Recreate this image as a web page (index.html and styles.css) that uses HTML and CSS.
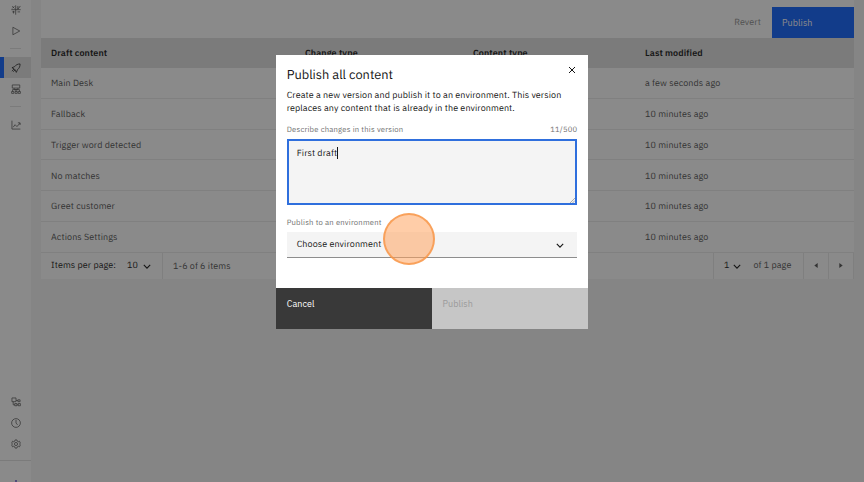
FILE: index.html
```
<!DOCTYPE html>
<html lang="en">
<head>
<meta charset="utf-8">
<title>Publish all content</title>
<link rel="stylesheet" href="styles.css">
</head>
<body>
<div class="app">
  <nav class="rail">
    <div class="rail-top">
      <a class="rail-item"><svg viewBox="0 0 32 32"><path d="M15 1v30M1 15h30M22 3v12M4 4l7 7M11 4l-7 7M20 9l3 3 7-9M4 22h8M8 19v8M21 22h8"/></svg></a>
      <a class="rail-item"><svg viewBox="0 0 32 32"><path d="M6 4v24l22-12z"/></svg></a>
      <i class="rule"></i>
      <a class="rail-item active"><svg viewBox="0 0 32 32"><path d="M29 3c-8 0-13 3-18 9l-8 3 7 4 3 3 4 8 4-9c6-5 8-10 8-18zM10 19l-7 7M13 22l-6 6"/></svg></a>
      <a class="rail-item"><svg viewBox="0 0 32 32"><path d="M4 3h24v10H4zM10 13v5h12v-5M16 18v6M5 24v-6h22v6M2 24h7v6H2zM13 24h7v6h-7zM23 24h7v6h-7z"/></svg></a>
      <i class="rule second"></i>
      <a class="rail-item"><svg viewBox="0 0 32 32"><path d="M3 2v27h27M7 23l6-8 6 6 10-11M22 9h7v7"/></svg></a>
    </div>
    <div class="rail-bottom">
      <a class="rail-item"><svg viewBox="0 0 32 32"><path d="M3 3h13v12H3zM7 15v10h5M16 11h6M22 9h7v6h-7zM12 21h7v7h-7zM23 21h7v7h-7zM19 25h4"/></svg></a>
      <a class="rail-item"><svg viewBox="0 0 32 32"><circle cx="16" cy="16" r="14"/><path d="M16 6v10l5 6"/></svg></a>
      <a class="rail-item"><svg viewBox="0 0 32 32"><circle cx="16" cy="16" r="5"/><path d="M13 3h6l1 4 3 2 4-2 3 6-3 3 3 3-3 6-4-2-3 2-1 4h-6l-1-4-3-2-4 2-3-6 3-3-3-3 3-6 4 2 3-2z"/></svg></a>
      <div class="rail-foot"><i></i></div>
    </div>
  </nav>
  <main class="content">
    <div class="toolbar"><span class="revert">Revert</span><button class="primary">Publish</button></div>
    <div class="row head"><span>Draft content</span><span>Change type</span><span>Content type</span><span>Last modified</span></div>
    <div class="row"><span>Main Desk</span><span></span><span></span><span>a few seconds ago</span></div>
    <div class="row"><span>Fallback</span><span></span><span></span><span>10 minutes ago</span></div>
    <div class="row"><span>Trigger word detected</span><span></span><span></span><span>10 minutes ago</span></div>
    <div class="row"><span>No matches</span><span></span><span></span><span>10 minutes ago</span></div>
    <div class="row"><span>Greet customer</span><span></span><span></span><span>10 minutes ago</span></div>
    <div class="row"><span>Actions Settings</span><span></span><span></span><span>10 minutes ago</span></div>
    <div class="pager">
      <div class="per-page"><span>Items per page:</span><b>10</b><svg class="chev" viewBox="0 0 10 6"><path d="M1 1l4 4 4-4"/></svg></div>
      <div class="range">1-6 of 6 items</div>
      <div class="page-no"><b>1</b><svg class="chev" viewBox="0 0 10 6"><path d="M1 1l4 4 4-4"/></svg><span>of 1 page</span></div>
      <div class="step"><svg viewBox="0 0 4 6"><path d="M4 0v6L0 3z"/></svg></div>
      <div class="step"><svg viewBox="0 0 4 6"><path d="M0 0v6l4-3z"/></svg></div>
    </div>
  </main>
</div>
<div class="overlay">
  <section class="modal">
    <div class="body">
      <header><h2>Publish all content</h2><svg class="close" viewBox="0 0 8 8"><path d="M1 1l6 6M7 1L1 7"/></svg></header>
      <p>Create a new version and publish it to an environment. This version<br>replaces any content that is already in the environment.</p>
      <div class="labels"><span class="label">Describe changes in this version</span><span class="label">11/500</span></div>
      <div class="textarea"><span>First draft</span><i class="caret"></i><svg class="grip" viewBox="0 0 6 6"><path d="M0 6l6-6M3 6l3-3"/></svg></div>
      <div class="label env">Publish to an environment</div>
      <div class="select"><span>Choose environment</span><svg class="chev" viewBox="0 0 10 6"><path d="M1 1l4 4 4-4"/></svg></div>
    </div>
    <footer><button class="cancel">Cancel</button><button class="disabled">Publish</button></footer>
  </section>
</div>
<div class="pointer"></div>
</body>
</html>
```
FILE: styles.css
```
* { box-sizing: border-box; }
body { margin: 0; width: 864px; height: 482px; overflow: hidden; background: #f4f4f4; color: #161616; font: 8.96px/12px "IBM Plex Sans", Roboto, "Liberation Sans", sans-serif; letter-spacing: .1px; text-rendering: geometricPrecision; }
button { border: 0; font: inherit; letter-spacing: inherit; text-align: left; }
svg { display: block; fill: none; stroke: currentColor; }
.app { display: flex; height: 482px; }
.rail { display: flex; flex-direction: column; justify-content: space-between; width: 31px; background: #fff; color: #525252; }
.rail-top { margin-top: -1px; }
.rail-item { display: flex; align-items: center; justify-content: center; height: 21px; }
.rail-item svg { width: 10px; height: 10px; stroke-width: 2.4; }
.rail .active { background: #e0e0e0; border-left: 4px solid #0f62fe; padding-right: 4px; color: #161616; }
.rule { display: block; width: 11px; height: 1px; margin: 7px auto 8px; background: #e0e0e0; }
.rule.second { margin: 7px auto; }
.rail-foot { height: 22px; margin-top: 6px; border-top: 1px solid #e0e0e0; display: flex; align-items: flex-end; justify-content: center; }
.rail-foot i { width: 2px; height: 2px; background: #8a80dd; }
.content { width: 813px; margin-left: 10px; }
.toolbar { display: flex; justify-content: flex-end; height: 38px; padding-top: 7px; background: #fff; }
.revert { padding: 10px 11px; color: #8d8d8d; }
.primary { width: 82px; padding: 0 10px; background: #0f62fe; color: #fff; }
.row { display: grid; grid-template-columns: 254px 168px 172px 1fr; align-items: center; height: 30.75px; padding: 3px 10px 0; background: #fff; border-bottom: 1px solid #ebebeb; color: #525252; }
.head { height: 30px; padding-top: 2px; background: #e0e0e0; border-color: #e0e0e0; color: #161616; font-weight: 600; }
.pager { display: flex; height: 26.5px; background: #fff; color: #525252; line-height: 28px; }
.pager b { color: #161616; font-weight: 400; }
.pager div { border-right: 1px solid #e8e8e8; }
.chev { width: 8px; height: 5px; color: #161616; stroke-width: 1.4; }
.per-page, .page-no { display: flex; align-items: center; }
.per-page, .page-no { padding-top: 1px; }
.per-page { width: 122px; padding-left: 10px; color: #161616; }
.per-page b { margin: 0 5px 0 11px; }
.range { flex: 1; padding-left: 10px; }
.page-no { width: 90px; padding-left: 10px; }
.page-no b { margin-right: 4px; }
.page-no span { margin-left: 12px; }
.step { display: flex; align-items: center; justify-content: center; width: 25px; }
.step svg { width: 4px; height: 5px; fill: currentColor; stroke: none; }
.overlay { position: fixed; inset: 0; background: rgba(22,22,22,.5); }
.modal { width: 311.3px; height: 274px; margin: 55px 0 0 276.4px; background: #fff; display: flex; flex-direction: column; }
.body { flex: 1; padding: 12px 10.3px 0; }
header { display: flex; justify-content: space-between; height: 22px; }
h2 { margin: 0; font-size: 12.8px; line-height: 16px; font-weight: 400; letter-spacing: 0; }
.close { width: 8px; height: 8px; margin: -1px 1px 0 0; }
p { margin: 0; line-height: 13px; white-space: nowrap; }
.labels { display: flex; justify-content: space-between; margin-top: 9px; }
.label { font-size: 7.68px; line-height: 12px; letter-spacing: .2px; color: #6f6f6f; }
.textarea { position: relative; display: flex; height: 66px; margin-top: 3px; padding: 6px 8px; border: 2px solid #2f6fdd; background: #f4f4f4; line-height: 13px; }
.caret { width: 1px; height: 12px; background: #161616; }
.grip { position: absolute; right: 0; bottom: 0; width: 5px; height: 5px; stroke: #777; stroke-width: .7; }
.env { margin-top: 12px; }
.select { display: flex; align-items: center; justify-content: space-between; height: 26px; margin-top: 3px; padding: 1px 13px 0 10px; background: #f4f4f4; border-bottom: 1px solid #8d8d8d; }
footer { display: flex; height: 41px; }
footer button { flex: 1; padding: 0 10.4px 10px; }
.cancel { background: #393939; color: #fff; }
.disabled { background: #c6c6c6; color: #9a9a9a; }
.pointer { position: absolute; left: 383px; top: 213px; width: 52px; height: 52px; border-radius: 50%; border: 2px solid rgba(247,147,65,.75); background: rgba(255,164,96,.55); }
```
